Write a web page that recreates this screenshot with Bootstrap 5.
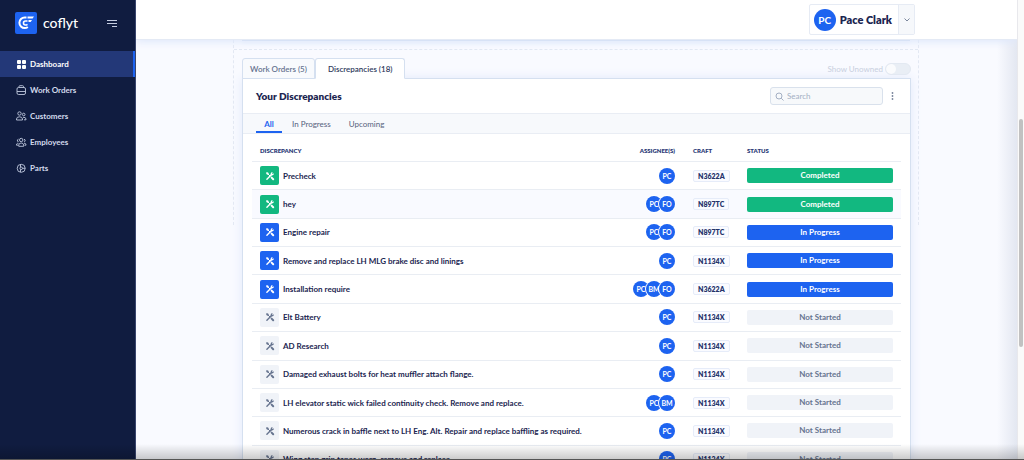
<!DOCTYPE html>
<html lang="en">
<head>
<meta charset="utf-8">
<meta name="viewport" content="width=device-width, initial-scale=1">
<title>coflyt – Dashboard</title>
<link rel="stylesheet" href="https://cdn.jsdelivr.net/npm/bootstrap@5.3.0/dist/css/bootstrap.min.css">
<script src="https://cdn.jsdelivr.net/npm/bootstrap@5.3.0/dist/js/bootstrap.bundle.min.js" defer></script>
<style>
:root{--navy:#101c40;--ink:#1b2550;--blue:#1d63f0;--green:#12b880;--line:#e9edf3;--edge:#d5e0f0}
body{font-family:Lato,"Open Sans",sans-serif;font-size:8px;line-height:12px;color:var(--ink);background:#f9faff}
button,input{font:inherit;color:inherit}
.app{height:100vh}
.side{width:136px;background:var(--navy);border-right:1px solid #39456d}
.brand-row{height:51px;padding:0 18px 5px 15px}
.brand-name{font-size:14px;line-height:20px;font-weight:500;color:#fff;margin-left:6px}
.side .nav-link{height:26px;padding:0 15px;font-size:8px;font-weight:700;color:#d3daec;gap:3px}
.side .nav-link.active{color:#fff;background:#233878;box-shadow:inset -2px 0 var(--blue)}
.topbar{height:40px;background:#fff;border-bottom:1px solid #e4eaf5;box-shadow:0 2px 8px #dfe8fb;padding:4px 102px 4px 0;z-index:2}
.user{border:1px solid #e6ebf4;border-radius:2px;background:#fff;padding:0}
.user-name{font-size:11px;line-height:16px;font-weight:800;color:var(--ink);padding:0 6px 0 4px}
.user-more{width:16px;background:#f6f8fb;border-left:1px solid #e6ebf4;color:#7b879d}
.av{display:inline-flex;align-items:center;justify-content:center;width:16px;height:16px;border-radius:50%;background:var(--blue);color:#fff;font-size:7px;font-weight:700;box-shadow:0 0 0 1px #fff}
.av + .av{margin-left:-3px}
.av-lg{width:22px;height:22px;font-size:10px;box-shadow:none;margin-left:4px}
.stage{padding:0 98px 0 97px}
.framed{border:1px dashed #e3e8f3;border-width:0 1px;height:185px}
.prev{height:10px;border-bottom:1px dashed #e3e8f3}
.prev-card{height:1px;margin:0 8px;background:#c9d8ef;box-shadow:0 1px 4px #cfdcf3}
.panel-wrap{padding:8px 7px 0 8px}
.tabs{height:21px;margin-bottom:-1px;z-index:1}
.tab{border:1px solid var(--edge);border-radius:3px 3px 0 0;background:#f8fafd;color:#65728f;font-weight:600;padding:0 7px}
.tab.active{background:#fff;border-bottom-color:#fff;color:#303b5d;padding:0 12px}
.unowned{color:#c8cfde;gap:2px;min-height:0}
.unowned .form-check-input{width:26px;height:12px;float:none;margin:0;background-color:#e9eef5;border-color:#e3e9f2;background-image:url("data:image/svg+xml,%3csvg xmlns='http://www.w3.org/2000/svg' viewBox='-4 -4 8 8'%3e%3ccircle r='4' fill='%23fafbfd'/%3e%3c/svg%3e")}
.panel{background:#fff;border:1px solid var(--edge);box-shadow:0 0 10px #e1e9fa}
.panel-head{height:34px;padding:0 16px 0 13px}
.panel-title{font-size:10px;line-height:14px;font-weight:800}
.search{width:113px;height:18px;border:1px solid #d9e1ec;border-radius:3px;background:#f7f9fb;padding:0 4px;color:#a3afc3;gap:3px}
.search input{width:100%;border:0;background:none;outline:0;padding:0}
.search input::placeholder{color:#a3afc3;opacity:1}
.filters{height:21px;background:#f7f9fc;border:1px solid #e9edf4;border-width:1px 0;padding-left:13px;gap:10px}
.filter{border:0;background:none;padding:0;color:#56627d}
.filter.active{width:26px;color:var(--blue);font-weight:700;box-shadow:inset 0 -2px var(--blue)}
.filter + .filter + .filter{margin-left:8px}
.list-wrap{padding:0 9px}
.jobs{width:100%;height:340px;table-layout:fixed;border-collapse:separate;border-spacing:0}
.jobs th{height:28px;font-size:6px;font-weight:800;color:#2d3c78;padding:6px 0 0}
.jobs th,.jobs td{border:0 solid var(--line);border-bottom-width:1px;vertical-align:middle}
.jobs td{padding:0;font-weight:700}
.jobs th:first-child,.jobs td:first-child{padding-left:8px}
.jobs .hot td{background:#f9faff}
.c-who{width:62px}.c-craft{width:54px}.c-status{width:154px}
.jobs .who{padding-right:18px;text-align:right}
.job-ic{width:19px;height:19px;border-radius:2px;margin-right:4px}
.craft{display:inline-block;border:1px solid #e6ecf9;border-radius:2px;background:#fafbff;color:#26346c;padding:0 4px;font-size:7px;font-weight:800;line-height:10px}
.state{height:15px;line-height:15px;border-radius:2px;text-align:center;margin-right:8px}
.done{background:var(--green);color:#fff}.doing{background:var(--blue);color:#fff}.todo{background:#f0f3f8;color:#66748f}
.track{width:7px;background:#fafafa;border-left:1px solid #e8e8ec;padding:119px 1px 0}
.thumb{height:228px;border-radius:2px;background:#c1c1c1}
.side-shade{position:absolute;inset:40px 0 0 auto;width:20px;background:linear-gradient(90deg,#e3e7f100,#e3e7f1)}
.foot-shade{position:absolute;inset:auto 0 0 0;height:16px;background:linear-gradient(#0000,#0003);border-bottom:1px solid #555;z-index:3}
</style>
</head>
<body class="overflow-hidden">
<svg class="d-none">
<symbol id="tools" viewBox="0 0 10 10"><g fill="none" stroke="currentColor" stroke-linecap="round"><path d="M1.900 8.200 6.800 3.300" stroke-width="1.400"/><path d="M2.500 2.500 5 5" stroke-width="1"/><path d="M6.600 6.600 8.200 8.200" stroke-width="2"/></g><path d="M1 1.900 1.900 1 3.700 2 3.600 3.600 2 3.700Z" fill="currentColor"/><path d="M7.800 1.100 6.900 2.300 7.700 3.100 8.900 2.200A2 2 0 0 1 6.300 4.400L5.700 3.700A2 2 0 0 1 7.800 1.100" fill="currentColor"/></symbol>
</svg>
<div class="app d-flex position-relative">
  <aside class="side flex-shrink-0">
    <div class="brand-row d-flex align-items-center">
      <svg width="22" height="22" viewBox="0 0 22 22"><rect width="22" height="22" rx="2" fill="#1d63f0"/><g fill="none" stroke="#fff"><path d="M11.500 5.500H9.700A5.300 5.300 0 0 0 9.700 16.100Q11.500 16.100 12.800 15" stroke-width="2"/><path d="M12.500 9H10.500A2 2 0 0 0 10.500 13Q11.500 13 12.500 12.300" stroke-width="1.600"/></g><path d="M12.500 4.500H19L17.600 6.600H12.500ZM13.500 8H17L15.700 10H13.500Z" fill="#fff"/></svg>
      <span class="brand-name">coflyt</span>
      <button class="btn p-0 border-0 ms-auto d-flex" aria-label="Toggle menu"><svg width="10" height="8" viewBox="0 0 10 8" stroke="#c5cde2"><path d="M0 1.500H10M0 4.500H10M5 7.500H10"/></svg></button>
    </div>
    <nav class="nav flex-column">
      <a href="#" class="nav-link active d-flex align-items-center"><svg width="12" height="12" viewBox="0 0 12 12" fill="#fff"><rect x="2" y="2" width="4" height="4" rx="1"/><rect x="7" y="2" width="4" height="4" rx="1"/><rect x="2" y="7" width="4" height="4" rx="1"/><rect x="7" y="7" width="4" height="4" rx="1"/></svg>Dashboard</a>
      <a href="#" class="nav-link d-flex align-items-center"><svg width="12" height="12" viewBox="0 0 12 12" fill="none" stroke="#bfc8de" stroke-width=".9"><rect x="2" y="3.500" width="8.500" height="7" rx="1.500"/><path d="M4 3.500V2.500Q4 1.700 5 1.700H7.500Q8.500 1.700 8.500 2.500V3.500M2 7.500H10.500"/></svg>Work Orders</a>
      <a href="#" class="nav-link d-flex align-items-center"><svg width="12" height="12" viewBox="0 0 12 12" fill="none" stroke="#bfc8de" stroke-width=".9"><circle cx="4.500" cy="3.500" r="1.700"/><circle cx="8.700" cy="4.500" r="1.300"/><path d="M1.500 10V9Q1.700 6.800 4.500 6.800T7.500 9V10ZM8 7.300Q10.800 7 11 9V9.800H9"/></svg>Customers</a>
      <a href="#" class="nav-link d-flex align-items-center"><svg width="12" height="12" viewBox="0 0 12 12" fill="none" stroke="#bfc8de" stroke-width=".9"><circle cx="6.200" cy="4" r="1.700"/><path d="M3.700 10.300V9Q4 7 6.200 7T8.700 9V10.300ZM3.500 3.200Q1.800 3.500 2.500 5.300Q3 5.800 3.500 5.500M9 3.200Q10.700 3.500 10 5.300Q9.500 5.800 9 5.500M3.500 7.300H2.500Q1.400 7.600 1.500 9.200H3M9 7.300H10Q11.100 7.600 11 9.200H9.500"/></svg>Employees</a>
      <a href="#" class="nav-link d-flex align-items-center"><svg width="12" height="12" viewBox="0 0 12 12" fill="none" stroke="#bfc8de" stroke-width=".9"><circle cx="6.200" cy="6.300" r="4"/><circle cx="6.200" cy="6.300" r="1.300"/><path d="M7.500 6.300H10.200M5.500 2.400V5.200M5.500 7.500V10.200"/></svg>Parts</a>
    </nav>
  </aside>
  <div class="d-flex flex-column flex-grow-1 overflow-hidden position-relative">
    <header class="topbar d-flex justify-content-end flex-shrink-0 position-relative">
      <button class="user d-flex align-items-center" aria-label="Account menu">
        <span class="av av-lg">PC</span><span class="user-name">Pace Clark</span>
        <span class="user-more align-self-stretch d-flex align-items-center justify-content-center"><svg width="6" height="4" viewBox="0 0 6 4" fill="none" stroke="currentColor"><path d="M.5.500 3 3 5.500.500"/></svg></span>
      </button>
    </header>
    <div class="side-shade"></div>
    <main class="stage flex-grow-1 overflow-hidden position-relative">
      <div class="framed">
        <div class="prev"><div class="prev-card"></div></div>
        <div class="panel-wrap">
          <div class="tabs d-flex position-relative">
            <button class="tab">Work Orders (5)</button>
            <button class="tab active">Discrepancies (18)</button>
            <div class="unowned form-switch d-flex align-items-center ms-auto p-0">
              <label for="unowned">Show Unowned</label><input class="form-check-input" type="checkbox" role="switch" id="unowned">
            </div>
          </div>
          <section class="panel">
            <div class="panel-head d-flex align-items-center">
              <h2 class="panel-title m-0 me-auto">Your Discrepancies</h2>
              <label class="search d-flex align-items-center"><svg class="flex-shrink-0" width="9" height="9" viewBox="0 0 9 9" fill="none" stroke="currentColor"><circle cx="4" cy="4" r="3"/><path d="M6.200 6.200 8.500 8.500"/></svg><input type="search" placeholder="Search" aria-label="Search"></label>
              <button class="btn p-0 border-0 ms-2 d-flex" aria-label="More"><svg width="3" height="8" viewBox="0 0 3 8" fill="#78849b"><circle cx="1.500" cy="1" r=".9"/><circle cx="1.500" cy="4" r=".9"/><circle cx="1.500" cy="7" r=".9"/></svg></button>
            </div>
            <div class="filters d-flex">
              <button class="filter active">All</button><button class="filter">In Progress</button><button class="filter">Upcoming</button>
            </div>
            <div class="list-wrap">
              <table class="jobs">
                <colgroup><col><col class="c-who"><col class="c-craft"><col class="c-status"></colgroup>
                <thead><tr><th>DISCREPANCY</th><th class="who">ASSIGNEE(S)</th><th>CRAFT</th><th>STATUS</th></tr></thead>
                <tbody id="jobs"></tbody>
              </table>
            </div>
          </section>
        </div>
      </div>
    </main>
  </div>
  <div class="track flex-shrink-0"><div class="thumb"></div></div>
  <div class="foot-shade"></div>
</div>
<script>
const jobs = [
  ['Precheck', 'PC', 'N3622A', 'done'],
  ['hey', 'PC FO', 'N897TC', 'done'],
  ['Engine repair', 'PC FO', 'N897TC', 'doing'],
  ['Remove and replace LH MLG brake disc and linings', 'PC', 'N1134X', 'doing'],
  ['Installation require', 'PC BM FO', 'N3622A', 'doing'],
  ['Elt Battery', 'PC', 'N1134X', 'todo'],
  ['AD Research', 'PC', 'N1134X', 'todo'],
  ['Damaged exhaust bolts for heat muffler attach flange.', 'PC', 'N1134X', 'todo'],
  ['LH elevator static wick failed continuity check. Remove and replace.', 'PC BM', 'N1134X', 'todo'],
  ['Numerous crack in baffle next to LH Eng. Alt. Repair and replace baffling as required.', 'PC', 'N1134X', 'todo'],
  ['Wing step grip tapes worn, remove and replace', 'PC', 'N1134X', 'todo']
];
const labels = {done: 'Completed', doing: 'In Progress', todo: 'Not Started'};
document.getElementById('jobs').innerHTML = jobs.map(([name, who, craft, state], i) => `
  <tr class="${i === 1 ? 'hot' : ''}">
    <td><div class="d-flex align-items-center"><span class="job-ic ${state} d-flex align-items-center justify-content-center"><svg width="10" height="10"><use href="#tools"/></svg></span>${name}</div></td>
    <td class="who"><div class="d-flex justify-content-end">${who.split(' ').map(p => `<span class="av">${p}</span>`).join('')}</div></td>
    <td><span class="craft">${craft}</span></td>
    <td><div class="state ${state}">${labels[state]}</div></td>
  </tr>`).join('');
</script>
</body>
</html>
